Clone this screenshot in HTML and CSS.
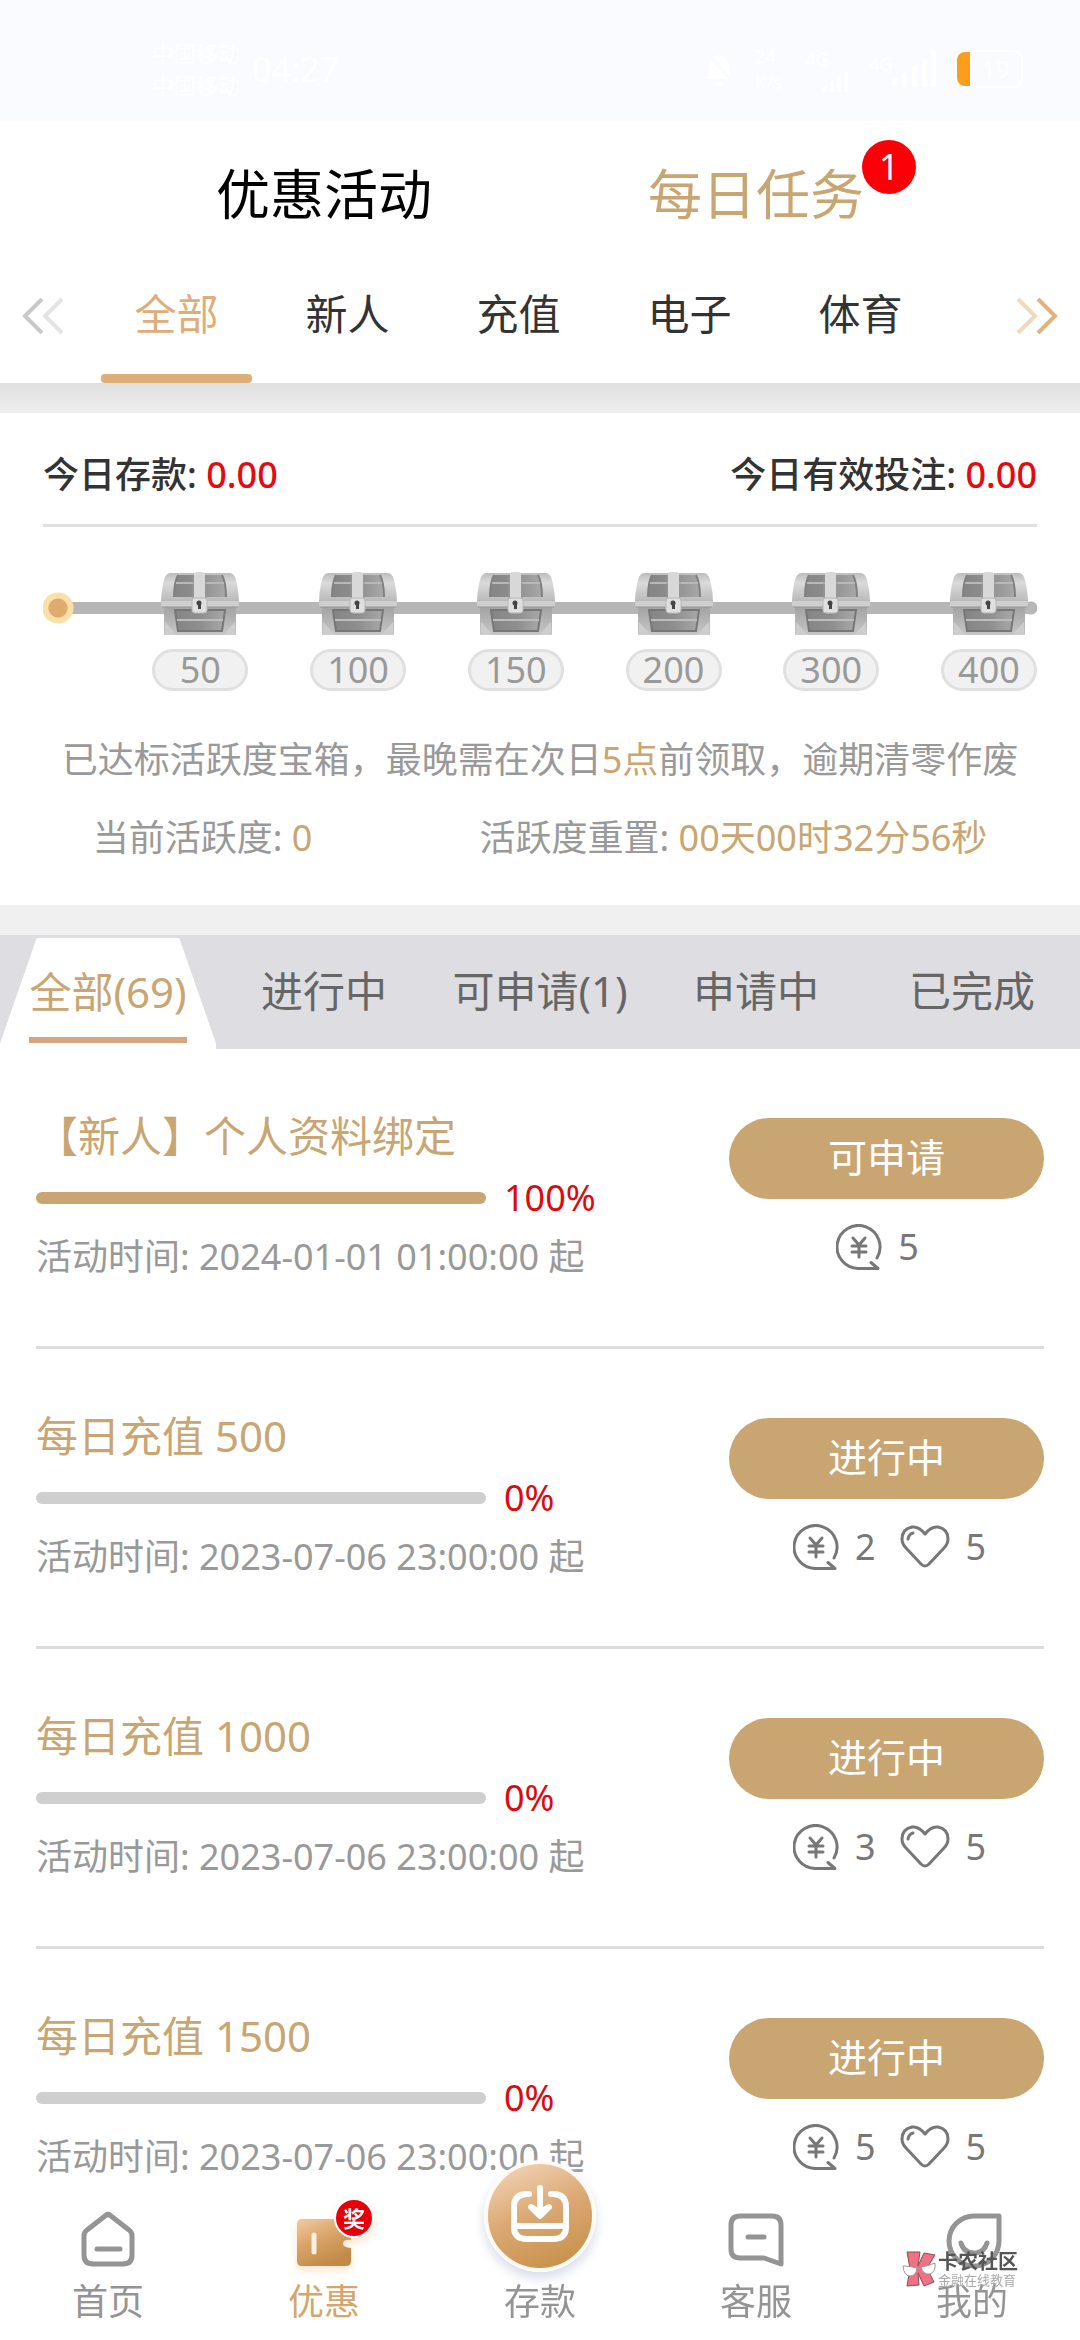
FILE: index.html
```html
<!DOCTYPE html>
<html lang="zh-CN">
<head>
<meta charset="utf-8">
<meta name="viewport" content="width=device-width, initial-scale=1">
<title>每日任务</title>
<link rel="stylesheet" href="styles.css">
</head>
<body>
<svg class="sprite" aria-hidden="true">
  <defs>
    <linearGradient id="metal" x1="0" y1="0" x2="0" y2="1"><stop offset="0" stop-color="#bdbdbd"/><stop offset=".35" stop-color="#dadada"/><stop offset="1" stop-color="#b8b8b8"/></linearGradient>
    <linearGradient id="wood" x1="0" y1="0" x2="1" y2="0"><stop offset="0" stop-color="#858585"/><stop offset=".5" stop-color="#8e8e8e"/><stop offset="1" stop-color="#a8a8a8"/></linearGradient>
    <linearGradient id="base" x1="0" y1="0" x2="0" y2="1"><stop offset="0" stop-color="#a2a2a2"/><stop offset="1" stop-color="#c6c6c6"/></linearGradient>
    <linearGradient id="gold" x1="0" y1="0" x2=".5" y2="1"><stop offset="0" stop-color="#f2cba3"/><stop offset=".5" stop-color="#d9a468"/><stop offset="1" stop-color="#c18a49"/></linearGradient>
    <linearGradient id="coin-gold" x1=".2" y1="0" x2=".6" y2="1"><stop offset="0" stop-color="#f3d4b8"/><stop offset=".5" stop-color="#dba874"/><stop offset="1" stop-color="#c8924c"/></linearGradient>
  </defs>
  <symbol id="chest" viewBox="0 0 78 64">
    <path d="M3 34H75V62Q75 63 74 63H4Q3 63 3 62Z" fill="url(#base)"/>
    <path d="M4 50L16 63H4ZM74 50L62 63H74Z" fill="#cdcdcd"/>
    <path d="M14 38H64L61 59H17Z" fill="url(#wood)"/>
    <path d="M14 38H64L61 59H17Z" fill="none" stroke="#777" stroke-width="2"/>
    <path d="M16 48H62" stroke="#bdbdbd" stroke-width="2"/>
    <path d="M9 1H69Q74 1 76 12Q78 21 78 30H0Q0 21 2 12Q4 1 9 1Z" fill="url(#metal)"/>
    <path d="M17 3H61Q65 11 65 25H13Q13 11 17 3Z" fill="url(#wood)"/>
    <path d="M17 3Q13 11 13 25M61 3Q65 11 65 25" stroke="#808080" stroke-width="2" fill="none"/>
    <path d="M15 11H63" stroke="#b8b8b8" stroke-width="2"/>
    <rect x="0" y="29" width="78" height="6" rx="2" fill="#cfcfcf"/>
    <path d="M1 35H77" stroke="#969696"/>
    <rect x="33" y="0" width="11" height="31" rx="3" fill="#d8d8d8"/>
    <path d="M32 4V26M45 4V26" stroke="#999"/>
    <rect x="31" y="26" width="15" height="15" rx="3" fill="#dfdfdf" stroke="#b8b8b8"/>
    <circle cx="38" cy="31" r="2.500" fill="#444"/><rect x="37" y="31" width="3" height="6" fill="#444"/>
  </symbol>
  <symbol id="coin" viewBox="0 0 46 46">
    <g fill="none" stroke="#777" stroke-width="3" stroke-linecap="round" stroke-linejoin="round">
      <path d="M41 34A21.500 21.500 0 1 0 23 44.500H42L35 38.500"/>
      <path d="M17 14L23 21L29 14M23 21V33M16 22H30M16 28H30"/>
    </g>
  </symbol>
  <symbol id="heart" viewBox="0 0 50 46">
    <g fill="none" stroke="#777" stroke-width="3" stroke-linecap="round" stroke-linejoin="round">
      <path d="M25 10Q19 2 12 3Q2 5 2 15Q2 20 6 24L21 40Q25 44 29 40L44 24Q48 20 48 15Q48 5 38 3Q31 2 25 10Z"/>
      <path d="M8 15Q9 10 13 9"/>
    </g>
  </symbol>
</svg>

<div class="status">
  <div class="status-left">
    <div class="carriers"><span>中国移动</span><span>中国移动</span></div>
    <span class="clock">04:27</span>
  </div>
  <div class="status-right">
    <svg width="36" height="38" viewBox="0 0 36 38" fill="#fff"><path d="M5 29Q8 24 8 17Q9 7 18 5Q27 7 28 17Q28 24 31 29ZM14 32H22Q20 36 18 36Q15 36 14 32Z"/><path d="M6 3L33 33" stroke="#fafbff" stroke-width="3"/></svg>
    <div class="speed"><span>24</span><span>K/s</span></div>
    <div class="signal"><span>4G</span><svg width="30" height="20" viewBox="0 0 30 20" fill="#fff"><path d="M2 14H6V20H2ZM9 10H13V20H9ZM16 5H20V20H16ZM23 0H27V20H23Z"/></svg></div>
    <div class="signal wide"><span>4G</span><svg width="44" height="36" viewBox="0 0 44 36" fill="#fff"><path d="M0 28H5V36H0ZM10 22H15V36H10ZM20 15H25V36H20ZM30 8H35V36H30ZM39 0H44V36H39Z"/></svg></div>
    <div class="battery"><span class="level"></span><span>19</span></div>
  </div>
</div>

<header class="header">
  <nav class="modes">
    <button class="mode" type="button">优惠活动</button>
    <button class="mode active" type="button">每日任务<span class="count">1</span></button>
  </nav>
  <div class="categories">
    <button class="arrow" type="button" aria-label="向左"><svg width="42" height="36" viewBox="0 0 42 36" fill="none" stroke-width="4"><path d="M20 1L3 18L20 35" stroke="#c8c8c8"/><path d="M40 1L23 18L40 35" stroke="#e4e4e4"/></svg></button>
    <div class="category-list">
      <button class="category active" type="button">全部</button>
      <button class="category" type="button">新人</button>
      <button class="category" type="button">充值</button>
      <button class="category" type="button">电子</button>
      <button class="category" type="button">体育</button>
    </div>
    <button class="arrow" type="button" aria-label="向右"><svg width="42" height="36" viewBox="0 0 42 36" fill="none" stroke-width="4"><path d="M2 1L19 18L2 35" stroke="#f2d9bd"/><path d="M22 1L39 18L22 35" stroke="#e3b27b"/></svg></button>
  </div>
</header>

<section class="activity">
  <div class="totals">
    <span>今日存款: <b>0.00</b></span>
    <span>今日有效投注: <b>0.00</b></span>
  </div>
  <div class="track">
    <ul class="chests">
      <li><svg class="chest"><use href="#chest"/></svg><span>50</span></li>
      <li><svg class="chest"><use href="#chest"/></svg><span>100</span></li>
      <li><svg class="chest"><use href="#chest"/></svg><span>150</span></li>
      <li><svg class="chest"><use href="#chest"/></svg><span>200</span></li>
      <li><svg class="chest"><use href="#chest"/></svg><span>300</span></li>
      <li><svg class="chest"><use href="#chest"/></svg><span>400</span></li>
    </ul>
  </div>
  <p class="hint">已达标活跃度宝箱，最晚需在次日<em>5点</em>前领取，逾期清零作废</p>
  <div class="facts">
    <span>当前活跃度: <em>0</em></span>
    <span>活跃度重置: <em>00天00时32分56秒</em></span>
  </div>
</section>

<nav class="filters">
  <button class="filter active" type="button"><span>全部(69)</span></button>
  <button class="filter" type="button">进行中</button>
  <button class="filter" type="button">可申请(1)</button>
  <button class="filter" type="button">申请中</button>
  <button class="filter" type="button">已完成</button>
</nav>

<main class="tasks">
  <article class="task">
    <div class="info">
      <h2>【新人】个人资料绑定</h2>
      <div class="progress"><progress max="100" value="100" aria-label="进度"></progress><span>100%</span></div>
      <p>活动时间: 2024-01-01 01:00:00 起</p>
    </div>
    <div class="side">
      <button class="action" type="button">可申请</button>
      <div class="rewards"><span class="reward money"><svg class="coin"><use href="#coin"/></svg>5</span></div>
    </div>
  </article>
  <article class="task">
    <div class="info">
      <h2>每日充值 500</h2>
      <div class="progress"><progress max="100" value="0" aria-label="进度"></progress><span>0%</span></div>
      <p>活动时间: 2023-07-06 23:00:00 起</p>
    </div>
    <div class="side">
      <button class="action" type="button">进行中</button>
      <div class="rewards"><span class="reward money"><svg class="coin"><use href="#coin"/></svg>2</span><span class="reward"><svg class="heart"><use href="#heart"/></svg>5</span></div>
    </div>
  </article>
  <article class="task">
    <div class="info">
      <h2>每日充值 1000</h2>
      <div class="progress"><progress max="100" value="0" aria-label="进度"></progress><span>0%</span></div>
      <p>活动时间: 2023-07-06 23:00:00 起</p>
    </div>
    <div class="side">
      <button class="action" type="button">进行中</button>
      <div class="rewards"><span class="reward money"><svg class="coin"><use href="#coin"/></svg>3</span><span class="reward"><svg class="heart"><use href="#heart"/></svg>5</span></div>
    </div>
  </article>
  <article class="task">
    <div class="info">
      <h2>每日充值 1500</h2>
      <div class="progress"><progress max="100" value="0" aria-label="进度"></progress><span>0%</span></div>
      <p>活动时间: 2023-07-06 23:00:00 起</p>
    </div>
    <div class="side">
      <button class="action" type="button">进行中</button>
      <div class="rewards"><span class="reward money"><svg class="coin"><use href="#coin"/></svg>5</span><span class="reward"><svg class="heart"><use href="#heart"/></svg>5</span></div>
    </div>
  </article>
</main>

<nav class="tabbar">
  <a class="tab" href="#home">
    <svg class="tab-icon" viewBox="0 0 60 60" fill="none" stroke="#949494" stroke-width="5" stroke-linecap="round" stroke-linejoin="round"><path d="M27 6Q30 3 33 6L51 20Q54 22 54 26V45Q54 54 45 54H15Q6 54 6 45V26Q6 22 9 20Z"/><path d="M19 39H42"/></svg>
    <span>首页</span>
  </a>
  <a class="tab active" href="#promo">
    <span class="promo">
      <svg class="tab-icon" viewBox="0 0 60 60"><path d="M8 9H52Q57 9 57 14V30Q49 29 49 34Q49 37 57 38V51Q57 56 52 56H8Q3 56 3 51V14Q3 9 8 9Z" fill="url(#gold)"/><path d="M20 25V42" stroke="#fdf0e2" stroke-width="5" stroke-linecap="round"/></svg>
      <span class="prize">奖</span>
    </span>
    <span>优惠</span>
  </a>
  <a class="tab" href="#deposit">
    <span class="tab-icon"><svg class="deposit" viewBox="0 0 112 112"><circle cx="56" cy="56" r="54" fill="url(#coin-gold)" stroke="#fffaf4" stroke-width="4"/><g fill="none" stroke="#fff" stroke-width="6" stroke-linecap="round" stroke-linejoin="round"><path d="M45 34H43Q30 34 30 47V67Q30 79 43 79H69Q82 79 82 67V47Q82 34 69 34H67M30 66H82M56 28V54"/><path d="M47 47L56 56L65 47L56 52Z" fill="#fff"/></g></svg></span>
    <span>存款</span>
  </a>
  <a class="tab" href="#service">
    <svg class="tab-icon" viewBox="0 0 60 60" fill="none" stroke="#949494" stroke-width="5" stroke-linecap="round" stroke-linejoin="round"><path d="M14 6H46Q55 6 55 15V54L38 48H14Q5 48 5 39V15Q5 6 14 6Z"/><path d="M22 27H38"/></svg>
    <span>客服</span>
  </a>
  <a class="tab" href="#me">
    <svg class="tab-icon" viewBox="0 0 60 60" fill="none" stroke="#949494" stroke-width="5" stroke-linecap="round" stroke-linejoin="round"><path d="M57 6H32A25 25 0 1 0 57 31Z"/><path d="M19 33Q22 43 32 43Q42 43 45 33"/></svg>
    <span>我的</span>
  </a>
  <div class="watermark">
    <svg width="34" height="36" viewBox="0 0 34 36"><g fill="#ee7283" stroke="#8a4a52"><path d="M5 1H18L16 15L22 2L33 4L25 17L32 31L22 35L16 22L17 34L5 35L8 18Z"/></g><g fill="#fff" stroke="#999"><path d="M1 15Q8 15 15 17Q14 25 8 25Q2 25 1 15Z"/><path d="M19 16Q26 15 33 12Q34 21 28 23Q21 24 19 16Z"/></g></svg>
    <div><strong>卡农社区</strong><small>金融在线教育</small></div>
  </div>
</nav>
</body>
</html>
```

FILE: styles.css
```css
* { box-sizing: border-box; }

body {
  margin: 0;
  min-height: 100vh;
  padding-bottom: 90px;
  background: #fff;
  color: #333;
  font-family: "Noto Sans", "Noto Sans CJK SC", sans-serif;
  font-size: 36px;
  line-height: 42px;
}

button {
  margin: 0;
  padding: 0;
  border: 0;
  background: none;
  color: inherit;
  font: inherit;
}

svg { display: block; }
em { color: #c9a571; font-style: normal; }
.sprite { position: absolute; width: 0; height: 0; }

/* status bar */
.status {
  display: flex;
  justify-content: space-between;
  align-items: center;
  height: 121px;
  padding: 16px 57px 0 152px;
  background: #fafbff;
  color: #fff;
}
.status-left { display: flex; align-items: center; gap: 12px; }
.carriers { display: flex; flex-direction: column; font-size: 22px; line-height: 32px; }
.clock { font-size: 34px; }
.status-right { display: flex; align-items: center; gap: 18px; }
.speed, .signal { display: flex; flex-direction: column; font-size: 18px; line-height: 26px; }
.speed { width: 32px; }
.signal { width: 46px; }
.signal svg { align-self: flex-end; }
.signal.wide { width: 68px; flex-direction: row; }
.battery {
  display: flex;
  align-items: center;
  gap: 12px;
  width: 68px;
  height: 38px;
  overflow: hidden;
  border: 2px solid #fff;
  border-radius: 10px;
  font-size: 24px;
}
.level { width: 13px; height: 34px; background: #fc9d1c; }

/* header */
.modes { display: flex; padding: 31px 10% 0; }
.mode { flex: 1; font-size: 54px; line-height: 84px; color: #000; }
.mode.active { position: relative; color: #c9a571; }
.count {
  position: absolute;
  top: -12px;
  right: 56px;
  width: 54px;
  height: 54px;
  border-radius: 50%;
  background: #fb0007;
  color: #fff;
  font-size: 36px;
  line-height: 54px;
}
.categories { display: flex; justify-content: space-between; padding: 33px 22px 0; }
.arrow { height: 94px; }
.category-list { display: flex; flex: 1; max-width: 855px; margin-right: 47px; margin-left: 4px; }
.category {
  position: relative;
  flex: 1;
  height: 114px;
  padding-bottom: 24px;
  font-size: 42px;
}
.category.active { color: #dfae78; }
.category.active::after {
  content: "";
  position: absolute;
  right: 10px;
  bottom: 0;
  left: 10px;
  height: 9px;
  border-radius: 4px;
  background: #dfae78;
}
.header::after {
  content: "";
  display: block;
  height: 30px;
  background: linear-gradient(#e0e0e0, #eee);
}

/* activity panel */
.activity {
  padding: 41px 43px 45px;
  border-bottom: 30px solid #f0f0f0;
}
.totals {
  display: flex;
  justify-content: space-between;
  padding-bottom: 28px;
  border-bottom: 3px solid #e0e0e0;
  font-weight: 500;
}
.totals b { color: #e30b12; font-weight: 500; }
.track {
  display: flex;
  justify-content: flex-end;
  margin-top: 45px;
  background:
    radial-gradient(circle at 15px 36px, #e0aa70 9px, #fae0a6 10px, #fae0a6 15px, transparent 16px),
    linear-gradient(#b6b6b6, #b6b6b6) 15px 30px / calc(100% - 21px) 12px no-repeat,
    radial-gradient(circle at calc(100% - 6px) 36px, #b6b6b6 6px, transparent 7px);
}
.chests {
  display: flex;
  justify-content: space-between;
  width: 89%;
  margin: 0;
  padding: 0;
  list-style: none;
}
.chests li { display: flex; flex-direction: column; align-items: center; gap: 13px; }
.chest { width: 78px; height: 64px; }
.chests span {
  width: 96px;
  height: 42px;
  border: 3px solid #e0e0e0;
  border-radius: 21px;
  background: #f1f1f1;
  color: #999;
  line-height: 36px;
  text-align: center;
}
.hint { margin: 48px -20px 0; color: #999; text-align: center; }
.facts { display: flex; justify-content: space-around; margin: 36px -34px 1px; color: #999; }

/* status filters */
.filters { display: flex; background: #dedde2; padding-top: 3px; }
.filter { flex: 1; height: 111px; padding-bottom: 6px; font-size: 42px; color: #666; white-space: nowrap; }
.filter.active {
  padding: 6px 0 0;
  background: #fff;
  clip-path: polygon(17% 0, 83% 0, 100% 95%, 100% 100%, 0 100%, 0 95%);
  color: #c9a571;
}
.filter.active span {
  display: inline-block;
  padding: 20px 0 24px;
  border-bottom: 6px solid #d6a67f;
}

/* task list */
.tasks { padding: 0 36px; }
.task {
  display: flex;
  justify-content: space-between;
  height: 300px;
  border-bottom: 3px solid #ddd;
}
.info { display: flex; flex-direction: column; gap: 17px; padding-top: 63px; }
.info h2 { margin: 0; color: #c9a571; font-size: 42px; font-weight: 400; line-height: 48px; }
.info p { margin: 0; color: #999; }
.progress { display: flex; align-items: center; gap: 18px; color: #dc0a0f; }
progress {
  width: 450px;
  height: 12px;
  overflow: hidden;
  border: 0;
  border-radius: 6px;
  appearance: none;
}
progress::-webkit-progress-bar { background: #cfcfcf; }
progress::-webkit-progress-value { background: #c9a571; }
.side { display: flex; flex-direction: column; gap: 25px; width: 315px; padding-top: 69px; }
.action {
  height: 81px;
  padding-bottom: 3px;
  border-radius: 41px;
  background: #c9a571;
  color: #fff;
  font-size: 39px;
}
.rewards { display: flex; justify-content: center; padding-left: 6px; color: #777; }
.reward { display: flex; align-items: center; gap: 16px; }
.money { margin-right: 24px; }
.coin { width: 46px; height: 46px; }
.heart { width: 50px; height: 46px; }

/* bottom tab bar */
.tabbar {
  position: fixed;
  right: 0;
  bottom: 0;
  left: 0;
  display: flex;
  background: #fff;
}
.tab {
  display: flex;
  flex: 1;
  flex-direction: column;
  align-items: center;
  gap: 8px;
  padding: 26px 0 14px;
  color: #949494;
  line-height: 48px;
  text-decoration: none;
}
.tab.active { color: #d3a66d; }
.tab-icon { width: 60px; height: 60px; }
.promo { position: relative; filter: drop-shadow(0 4px 4px #fbe3cc); }
.prize {
  position: absolute;
  top: -12px;
  right: -20px;
  width: 40px;
  height: 40px;
  border: 2px solid #fff;
  border-radius: 50%;
  background: #e60009;
  color: #fff;
  font-size: 22px;
  font-weight: 700;
  line-height: 36px;
  text-align: center;
}
.deposit {
  width: 112px;
  height: 112px;
  margin: -50px 0 0 -26px;
  border-radius: 50%;
  box-shadow: 0 6px 12px #d8dcea;
}
.watermark {
  position: absolute;
  right: 62px;
  bottom: 53px;
  display: flex;
  gap: 2px;
}
.watermark div { display: flex; flex-direction: column; }
.watermark strong { color: #555; font-size: 20px; line-height: 22px; }
.watermark small { color: #aaa; font-size: 13px; line-height: 14px; }
```
